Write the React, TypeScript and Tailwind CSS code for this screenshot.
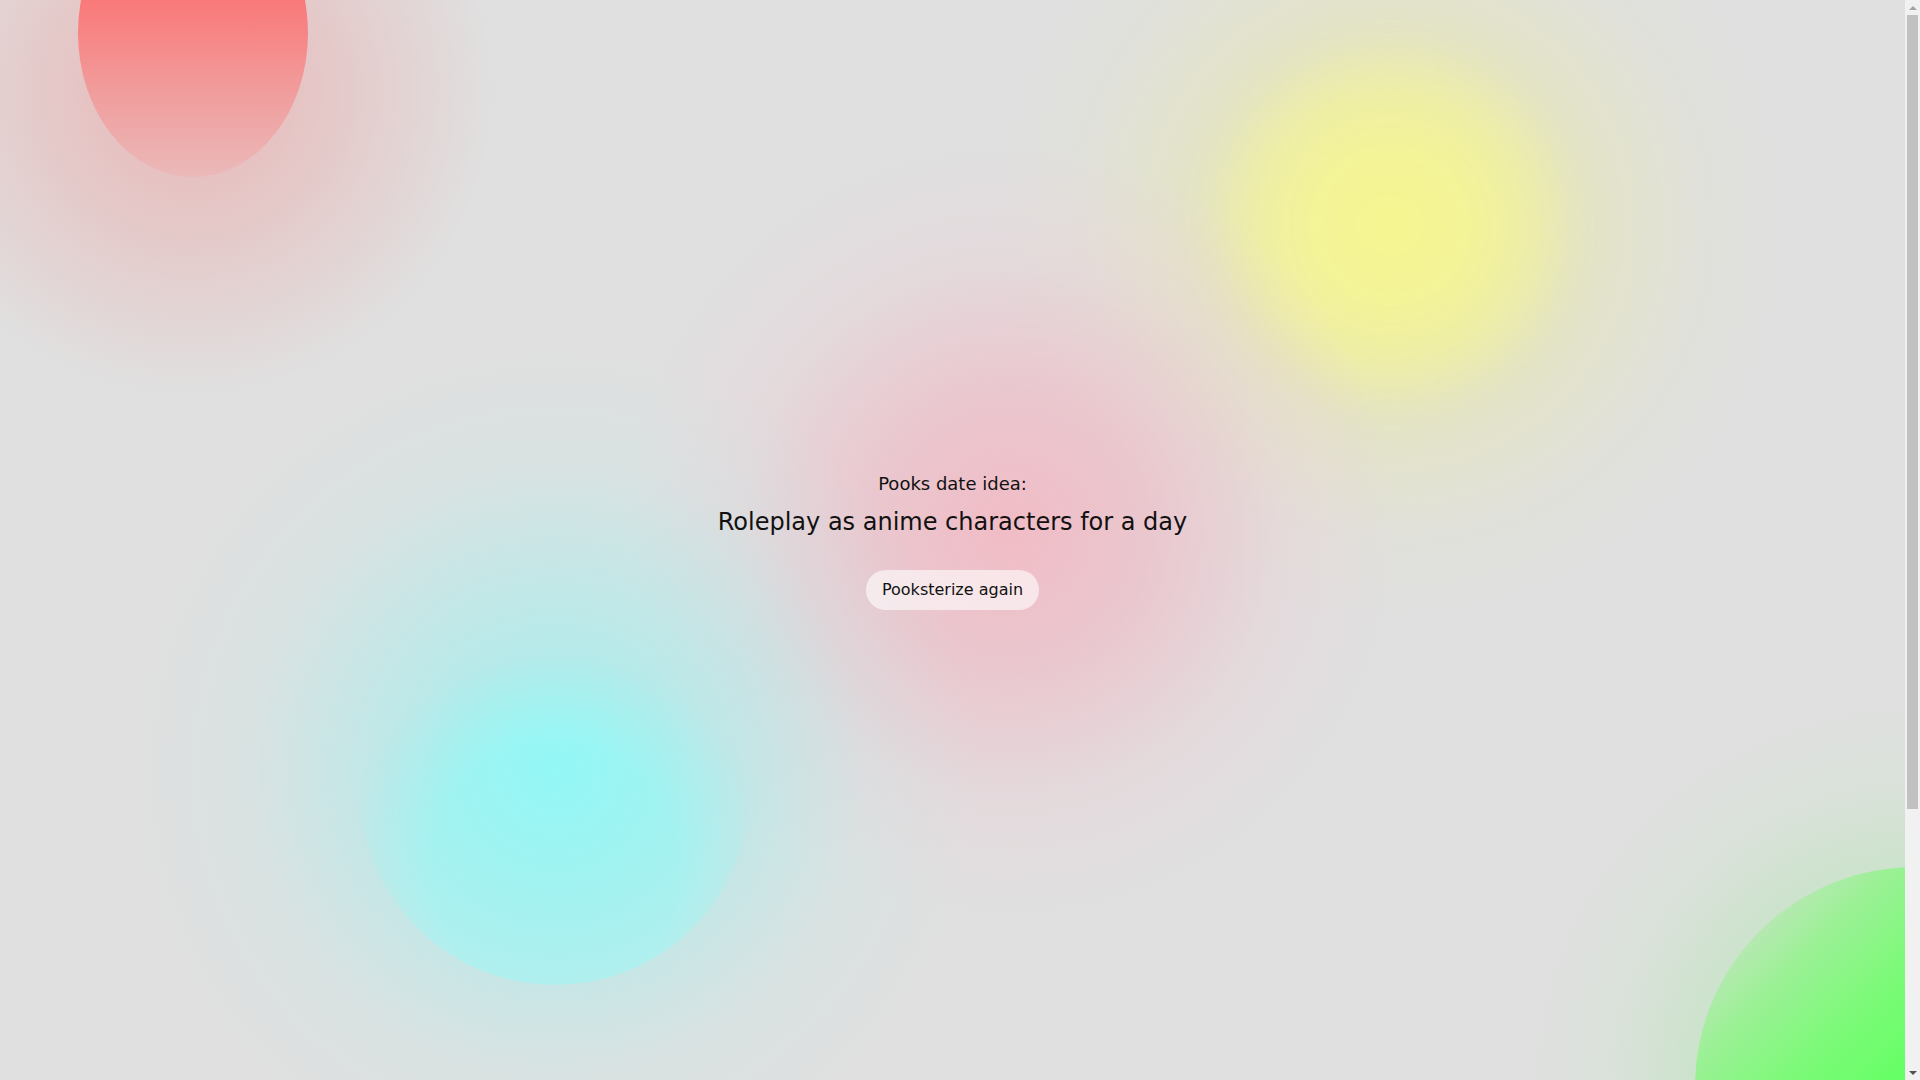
import { useState } from 'react';

const ideas = [
  'Roleplay as anime characters for a day',
  'Build a blanket fort and watch movies',
  'Cook a three course meal together',
  'Go stargazing with hot chocolate',
];

// soft colour blobs painted behind the text
function Blobs() {
  return (
    <div className="pointer-events-none absolute inset-0">
      {/* red, top left */}
      <div className="absolute left-[-110px] top-[-210px] h-[600px] w-[600px] rounded-full bg-[radial-gradient(circle,rgba(245,130,130,0.45)_0%,rgba(240,150,150,0.3)_35%,rgba(236,170,170,0)_72%)]" />
      <div className="absolute left-[78px] top-[-111px] h-[288px] w-[230px] rounded-[50%] bg-[linear-gradient(180deg,#ff6262_0%,#fa7878_38%,#f19c9c_70%,#ebb9b9_100%)]" />

      {/* yellow, top right */}
      <div className="absolute left-[990px] top-[-175px] h-[800px] w-[800px] rounded-full bg-[radial-gradient(circle,rgba(242,242,140,0.6)_0%,rgba(236,236,150,0.4)_30%,rgba(230,230,190,0.15)_55%,rgba(230,230,190,0)_70%)]" />
      <div className="absolute left-[1220px] top-[55px] h-[340px] w-[340px] rounded-full bg-[radial-gradient(circle,#f6f68f_0%,#f3f398_35%,rgba(238,238,165,0.7)_65%,rgba(236,236,170,0)_100%)] blur-xl" />

      {/* pink, centre */}
      <div className="absolute left-[630px] top-[150px] h-[760px] w-[760px] rounded-full bg-[radial-gradient(circle,#f1bcc6_0%,rgba(238,190,200,0.75)_25%,rgba(234,205,212,0.35)_50%,rgba(224,224,224,0)_72%)]" />

      {/* cyan, bottom left */}
      <div className="absolute left-[135px] top-[350px] h-[840px] w-[840px] rounded-full bg-[radial-gradient(circle,rgba(150,245,243,0.85)_0%,rgba(160,240,240,0.65)_20%,rgba(165,238,238,0.47)_33%,rgba(190,232,232,0.2)_52%,rgba(224,224,224,0)_71%)]" />
      <div className="absolute left-[360px] top-[595px] h-[390px] w-[390px] rounded-full bg-[radial-gradient(circle_at_50%_45%,#93f8f6_0%,#9ff3f1_35%,#b0efee_75%,#b8ecec_100%)] [-webkit-mask-image:radial-gradient(circle_at_50%_70%,black_125px,transparent_215px)] [mask-image:radial-gradient(circle_at_50%_70%,black_125px,transparent_215px)]" />

      {/* green, bottom right */}
      <div className="absolute left-[1465px] top-[637px] h-[900px] w-[900px] rounded-full bg-[radial-gradient(circle,rgba(150,240,150,0.6)_0%,rgba(170,232,170,0.45)_30%,rgba(200,228,200,0.25)_48%,rgba(224,224,224,0)_62%)]" />
      <div className="absolute left-[1695px] top-[867px] h-[440px] w-[440px] rounded-full bg-[linear-gradient(135deg,#b8e8b4_14%,#9cf096_22%,#7cfa78_35%,#64ff64_48%)]" />
    </div>
  );
}

// classic browser scrollbar, page scrolled to the top
function Scrollbar() {
  return (
    <div className="flex h-full w-[15px] shrink-0 flex-col items-center bg-[#f1f1f1]">
      <div className="flex h-[15px] w-full items-center justify-center">
        <div className="h-0 w-0 border-x-[4px] border-b-[4px] border-x-transparent border-b-[#a3a3a3]" />
      </div>
      <div className="h-[794px] w-[11px] bg-[#c1c1c1]" />
      <div className="flex-1" />
      <div className="flex h-[15px] w-full items-center justify-center">
        <div className="h-0 w-0 border-x-[4px] border-t-[4px] border-x-transparent border-t-[#505050]" />
      </div>
    </div>
  );
}

export default function App() {
  const [index, setIndex] = useState(0);

  return (
    <div
      className="flex h-screen w-full overflow-hidden bg-[#e0e0e0] text-[#111111]"
      style={{ fontFamily: '"DejaVu Sans", Verdana, sans-serif' }}
    >
      <div className="relative flex-1 overflow-hidden">
        <Blobs />
        <main className="relative flex h-full flex-col items-center justify-center text-center">
          <p className="text-lg">Pooks date idea:</p>
          <h1 className="mt-2 text-2xl">{ideas[index]}</h1>
          <button
            className="mt-8 rounded-full bg-white/60 px-4 py-2 text-base"
            onClick={() => setIndex((index + 1) % ideas.length)}
          >
            Pooksterize again
          </button>
        </main>
      </div>
      <Scrollbar />
    </div>
  );
}
